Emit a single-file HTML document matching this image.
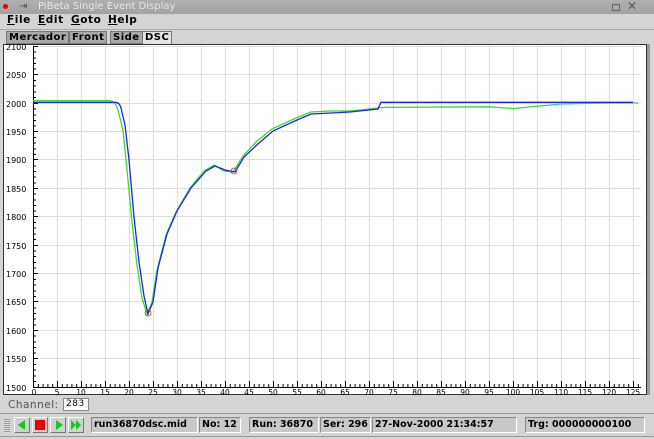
<!DOCTYPE html>
<html><head><meta charset="utf-8"><style>
*{margin:0;padding:0;box-sizing:border-box}
body{width:654px;height:439px;background:#d4d4d4;font-family:"DejaVu Sans","Liberation Sans",sans-serif;position:relative;overflow:hidden;font-size:11px;color:#000}
.abs{position:absolute}
.title{left:0;top:0;width:654px;height:14px;background:linear-gradient(#b0b0b0,#a2a2a2);color:#e8e8e8;font-size:10px;line-height:14px}
.menu{top:14px;left:0;font-weight:bold;font-size:10.5px;letter-spacing:0.6px}
.tab{top:31px;height:13px;border:1px solid #777;background:#a8a8a8;font-weight:bold;font-size:10px;line-height:11px;padding:0 2px;letter-spacing:0.5px}
.cell{top:417px;height:16px;border:1px solid #888;border-right-color:#fff;border-bottom-color:#fff;background:#c8c8c8;font-weight:bold;font-size:9.5px;line-height:14px;padding:0 2px;letter-spacing:0;white-space:nowrap;overflow:hidden}
.btn{top:417px;width:16px;height:16px;border:1px solid #fff;border-right-color:#777;border-bottom-color:#777;background:#d0d0d0}
</style></head><body>
<div class="abs title"><span style="position:absolute;left:3px;top:4px;width:5px;height:5px;background:#e00;border-radius:50%"></span><span style="position:absolute;left:19px;top:0;color:#555">⇥</span><span style="position:absolute;left:38px">PiBeta Single Event Display</span><span style="position:absolute;left:612px;top:4px;width:8px;height:7px;border:1px solid #666"></span><span style="position:absolute;left:627px;top:-1px;color:#555;font-size:12px">✕</span></div>
<div class="abs menu" style="left:7px"><u>F</u>ile</div>
<div class="abs menu" style="left:38px"><u>E</u>dit</div>
<div class="abs menu" style="left:71px"><u>G</u>oto</div>
<div class="abs menu" style="left:108px"><u>H</u>elp</div>
<div class="abs" style="left:0;top:29px;width:654px;height:1px;background:#aaa"></div>
<div class="abs tab" style="left:6px">Mercador</div>
<div class="abs tab" style="left:69px">Front</div>
<div class="abs tab" style="left:110px">Side</div>
<div class="abs tab" style="left:142px;background:#e4e4e4;border-bottom:none">DSC</div>
<div class="abs" style="left:3px;top:44px;width:644px;height:351px;border:1px solid #333;background:#fff"></div>
<div class="abs" style="left:647px;top:44px;width:3px;height:351px;background:#999"></div>
<svg class="abs" style="left:0;top:0" width="654" height="400" font-family="DejaVu Sans,sans-serif" font-size="8">
<g stroke="#ddd" stroke-width="1">
<path d="M57.5 46V387M81.5 46V387M105.5 46V387M129.5 46V387M153.5 46V387M177.5 46V387M201.5 46V387M225.5 46V387M249.5 46V387M273.5 46V387M297.5 46V387M321.5 46V387M345.5 46V387M369.5 46V387M393.5 46V387M417.5 46V387M441.5 46V387M465.5 46V387M489.5 46V387M513.5 46V387M537.5 46V387M561.5 46V387M585.5 46V387M609.5 46V387M633.5 46V387"/>
<path d="M33 46.5H641M33 74.5H641M33 103.5H641M33 131.5H641M33 159.5H641M33 188.5H641M33 216.5H641M33 245.5H641M33 273.5H641M33 301.5H641M33 330.5H641M33 358.5H641"/>
</g>
<path d="M33.5 46V387.5H641" stroke="#000" fill="none"/>
<g stroke="#000">
<path d="M33 46.5h5M33 52h3M33 58h3M33 63.5h3M33 69h3M33 74.5h5M33 80.5h3M33 86h3M33 92h3M33 97.5h3M33 103.5h5M33 109h3M33 115h3M33 120.5h3M33 126h3M33 131.5h5M33 137.5h3M33 143h3M33 149h3M33 154.5h3M33 159.5h5M33 166h3M33 171.5h3M33 177h3M33 183h3M33 188.5h5M33 194h3M33 200h3M33 205.5h3M33 211h3M33 216.5h5M33 222.5h3M33 228h3M33 234h3M33 239.5h3M33 245.5h5M33 251h3M33 256.5h3M33 262.5h3M33 268h3M33 273.5h5M33 279.5h3M33 285h3M33 291h3M33 296.5h3M33 301.5h5M33 308h3M33 313.5h3M33 319h3M33 325h3M33 330.5h5M33 336h3M33 342h3M33 347.5h3M33 353h3M33 358.5h5M33 364.5h3M33 370h3M33 376h3M33 381.5h3"/>
</g>
<g fill="#000">
<text x="6" y="50">2100</text><text x="6" y="78">2050</text><text x="6" y="107">2000</text><text x="6" y="135">1950</text><text x="6" y="163">1900</text><text x="6" y="192">1850</text><text x="6" y="220">1800</text><text x="6" y="249">1750</text><text x="6" y="277">1700</text><text x="6" y="305">1650</text><text x="6" y="334">1600</text><text x="6" y="362">1550</text><text x="6" y="391">1500</text>
</g>
<g fill="#000" font-size="7.5" text-anchor="middle">
<text x="34" y="395">0</text><text x="57" y="395">5</text><text x="81" y="395">10</text><text x="105" y="395">15</text><text x="129" y="395">20</text><text x="153" y="395">25</text><text x="177" y="395">30</text><text x="201" y="395">35</text><text x="225" y="395">40</text><text x="249" y="395">45</text><text x="273" y="395">50</text><text x="297" y="395">55</text><text x="321" y="395">60</text><text x="345" y="395">65</text><text x="369" y="395">70</text><text x="393" y="395">75</text><text x="417" y="395">80</text><text x="441" y="395">85</text><text x="465" y="395">90</text><text x="489" y="395">95</text><text x="513" y="395">100</text><text x="537" y="395">105</text><text x="561" y="395">110</text><text x="585" y="395">115</text><text x="609" y="395">120</text><text x="633" y="395">125</text>
</g>
<path stroke="#000" d="M57.5 387v-6M81.5 387v-6M105.5 387v-6M129.5 387v-6M153.5 387v-6M177.5 387v-6M201.5 387v-6M225.5 387v-6M249.5 387v-6M273.5 387v-6M297.5 387v-6M321.5 387v-6M345.5 387v-6M369.5 387v-6M393.5 387v-6M417.5 387v-6M441.5 387v-6M465.5 387v-6M489.5 387v-6M513.5 387v-6M537.5 387v-6M561.5 387v-6M585.5 387v-6M609.5 387v-6M633.5 387v-6"/>
<path stroke="#000" stroke-width="3" stroke-dasharray="1 3.8" d="M33 385.5H641" fill="none"/>
<path fill="none" stroke="#33dd33" stroke-width="1.3" d="M33 100.6L109 100.6C114 101 116 104 118 110L123 130L127 170L132 222L137 265L142 298L147 314L152 302L157 270L166 235L176 212L190 188L204 171L214 165L224 171L233 172L243 156L257 141L272 129L296 118L311 112L330 111L350 111L378 108L383 107.4L489 106.8L513 108.5L561 104L609 102.9L638 102.9"/>
<path fill="none" stroke="#2222ee" stroke-width="1.3" d="M33 102.3L115 102.3C118 102.3 120 104 121 108L125 125L129 160L134 217L139 262L144 296L148 314L153 302L158 268L167 234L177 211L191 188L206 171L215 166L225 170L235 172L244 157L259 143L273 131L297 120L311 114L331 113L350 112L378 109L381 102.3L633 102.3"/>
<circle cx="148" cy="313" r="3" fill="none" stroke="#c33" stroke-width="0.8"/>
<circle cx="234" cy="171" r="3" fill="none" stroke="#c33" stroke-width="0.8"/>
</svg>
<div class="abs" style="left:8px;top:399px;color:#556;font-size:10.5px;letter-spacing:0.5px">Channel:</div>
<div class="abs" style="left:63px;top:398px;width:26px;height:13px;background:#fff;border:1px solid #888;font-size:9px;line-height:11px;padding-left:2px;letter-spacing:0.5px">283</div>
<div class="abs" style="left:0;top:413px;width:654px;height:1px;background:#999"></div>
<div class="abs" style="left:4px;top:419px;width:6px;height:14px;background:repeating-linear-gradient(#999 0 1px,#ddd 1px 2px)"></div>
<div class="abs btn" style="left:14px"><span style="position:absolute;left:3px;top:2px;border-right:7px solid #1c1;border-top:5px solid transparent;border-bottom:5px solid transparent"></span></div>
<div class="abs btn" style="left:32px"><span style="position:absolute;left:2px;top:2px;width:10px;height:10px;background:#e00"></span></div>
<div class="abs btn" style="left:50px"><span style="position:absolute;left:5px;top:2px;border-left:7px solid #1c1;border-top:5px solid transparent;border-bottom:5px solid transparent"></span></div>
<div class="abs btn" style="left:68px"><span style="position:absolute;left:2px;top:2px;border-left:5px solid #1c1;border-top:5px solid transparent;border-bottom:5px solid transparent"></span><span style="position:absolute;left:7px;top:2px;border-left:5px solid #1c1;border-top:5px solid transparent;border-bottom:5px solid transparent"></span></div>
<div class="abs cell" style="left:91px;width:107px">run36870dsc.mid</div>
<div class="abs cell" style="left:199px;width:42px">No: 12</div>
<div class="abs cell" style="left:249px;width:70px">Run: 36870</div>
<div class="abs cell" style="left:320px;width:51px">Ser: 296</div>
<div class="abs cell" style="left:372px;width:145px">27-Nov-2000 21:34:57</div>
<div class="abs cell" style="left:525px;width:120px">Trg: 000000000100</div>
<div class="abs" style="left:0;top:436px;width:654px;height:1px;background:#999"></div>
</body></html>
